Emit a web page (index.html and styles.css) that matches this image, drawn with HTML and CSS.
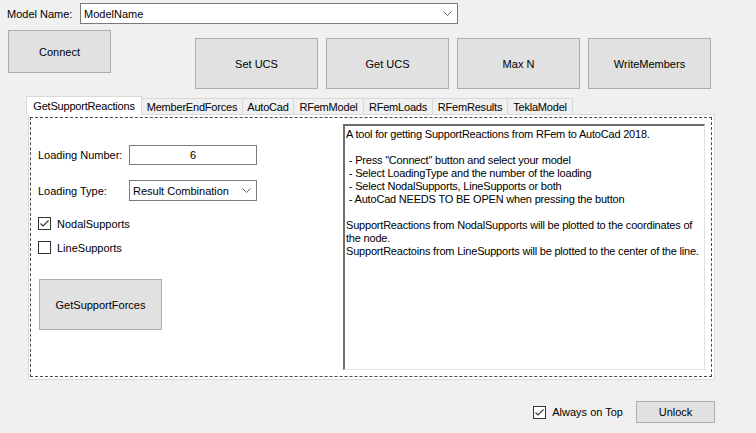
FILE: index.html
```html
<!DOCTYPE html>
<html>
<head>
<meta charset="utf-8">
<link rel="stylesheet" href="styles.css">
</head>
<body>
<div class="app">
  <div class="row-top">
    <span class="lbl-model">Model Name:</span>
    <div class="combo combo-model">
      <span>ModelName</span>
      <svg class="chev" width="9" height="5" viewBox="0 0 9 5"><path d="M0.5 0.5 L4.5 4.5 L8.5 0.5" fill="none" stroke="#606060" stroke-width="1"/></svg>
    </div>
  </div>

  <div class="row-btns">
    <div class="btn btn-connect">Connect</div>
    <div class="ucs">
      <div class="btn btn-big">Set UCS</div>
      <div class="btn btn-big">Get UCS</div>
      <div class="btn btn-big">Max N</div>
      <div class="btn btn-big">WriteMembers</div>
    </div>
  </div>

  <div class="tabs">
    <div class="tab active t1">GetSupportReactions</div>
    <div class="tab t2">MemberEndForces</div>
    <div class="tab t3">AutoCad</div>
    <div class="tab t4">RFemModel</div>
    <div class="tab t5">RFemLoads</div>
    <div class="tab t6">RFemResults</div>
    <div class="tab t7">TeklaModel</div>
  </div>

  <div class="panel">
    <div class="focus">
      <div class="left">
        <div class="field field-num">
          <span class="flabel">Loading Number:</span>
          <div class="input">6</div>
        </div>
        <div class="field field-type">
          <span class="flabel">Loading Type:</span>
          <div class="combo combo-type">
            <span>Result Combination</span>
            <svg class="chev" width="9" height="5" viewBox="0 0 9 5"><path d="M0.5 0.5 L4.5 4.5 L8.5 0.5" fill="none" stroke="#606060" stroke-width="1"/></svg>
          </div>
        </div>
        <div class="check check-nodal">
          <span class="box"><svg width="11" height="11" viewBox="0 0 11 11"><path d="M1.5 5.5 L4 8 L9.5 2.5" fill="none" stroke="#333" stroke-width="1.1"/></svg></span>
          <span>NodalSupports</span>
        </div>
        <div class="check check-line">
          <span class="box"></span>
          <span>LineSupports</span>
        </div>
        <div class="btn btn-gsf">GetSupportForces</div>
      </div>
      <div class="memo">A tool for getting SupportReactions from RFem to AutoCad 2018.

 - Press "Connect" button and select your model
 - Select LoadingType and the number of the loading
 - Select NodalSupports, LineSupports or both
 - AutoCad NEEDS TO BE OPEN when pressing the button

SupportReactions from NodalSupports will be plotted to the coordinates of
the node.
SupportReactoins from LineSupports will be plotted to the center of the line.</div>
    </div>
  </div>

  <div class="row-bottom">
    <div class="check check-top">
      <span class="box"><svg width="11" height="11" viewBox="0 0 11 11"><path d="M1.5 5.5 L4 8 L9.5 2.5" fill="none" stroke="#333" stroke-width="1.1"/></svg></span>
      <span>Always on Top</span>
    </div>
    <div class="btn btn-unlock">Unlock</div>
  </div>
</div>
</body>
</html>
```

FILE: styles.css
```css
* { box-sizing: border-box; }
html, body { margin: 0; padding: 0; }
body {
  background: #f0f0f0;
  font-family: "Liberation Sans", Arial, sans-serif;
  font-size: 11px;
  color: #000;
  width: 756px;
  height: 433px;
  overflow: hidden;
}
.app { width: 756px; }

.row-top {
  display: flex;
  align-items: center;
  padding: 3px 0 0 7px;
  height: 24px;
}
.lbl-model { width: 73px; }

.combo {
  position: relative;
  display: flex;
  align-items: center;
  justify-content: space-between;
  background: #fff;
  border: 1px solid #7a7a7a;
  padding: 0 5px 0 3px;
}
.combo-model { width: 378px; height: 21px; }
.chev { display: block; }

.btn {
  display: flex;
  align-items: center;
  justify-content: center;
  background: #e1e1e1;
  border: 1px solid #adadad;
}

.row-btns {
  display: flex;
  align-items: flex-start;
  padding-left: 8px;
  margin-top: 6px;
  height: 59px;
}
.btn-connect { width: 103px; height: 43px; }
.ucs {
  display: flex;
  gap: 8px;
  margin-left: 84px;
  margin-top: 8px;
}
.btn-big { width: 123px; height: 51px; }

.tabs {
  display: flex;
  align-items: flex-start;
  margin-left: 26px;
  margin-top: 7px;
  height: 18px;
}
.tab {
  height: 16px;
  margin-top: 2px;
  border-top: 1px solid #d9d9d9;
  border-right: 1px solid #d9d9d9;
  background: #f0f0f0;
  display: flex;
  align-items: center;
  justify-content: center;
  white-space: nowrap;
  letter-spacing: -0.2px;
}
.tab.active {
  position: relative;
  z-index: 1;
  height: 19px;
  margin-top: 0;
  border-left: 1px solid #d9d9d9;
  background: #fff;
  padding-bottom: 1px;
}
.t1 { width: 116px; }
.t2 { width: 101px; }
.t3 { width: 51px; }
.t4 { width: 70px; }
.t5 { width: 69px; }
.t6 { width: 75px; }
.t7 { width: 65px; }

.panel {
  margin-left: 28px;
  width: 687px;
  height: 266px;
  background: #fff;
  border: 1px solid #d9d9d9;
  padding: 2px 2px 2px 1px;
}
.focus {
  height: 100%;
  border: 1px dashed #4a4a4a;
  display: flex;
  padding-top: 6px;
}
.left {
  width: 312px;
  padding-left: 7px;
  position: relative;
}
.field {
  display: flex;
  align-items: center;
}
.flabel { width: 91px; }
.field-num { margin-top: 21px; }
.input {
  width: 128px;
  height: 20px;
  border: 1px solid #7a7a7a;
  display: flex;
  align-items: center;
  justify-content: center;
}
.field-type { margin-top: 15px; }
.combo-type { width: 128px; height: 21px; }

.check {
  display: flex;
  align-items: center;
  height: 13px;
}
.box {
  width: 13px;
  height: 13px;
  border: 1px solid #333;
  background: #fff;
  display: flex;
  align-items: center;
  justify-content: center;
  margin-right: 6px;
  flex: none;
}
.check-nodal { margin-top: 16px; }
.check-line { margin-top: 11px; }
.btn-gsf {
  width: 123px;
  height: 51px;
  margin-top: 25px;
  margin-left: 1px;
}

.memo {
  width: 362px;
  height: 246px;
  background: #fff;
  border-style: solid;
  border-width: 2px 1px 1px 2px;
  border-color: #6e6e6e #e3e3e3 #e3e3e3 #6e6e6e;
  padding: 2px 0 0 1px;
  white-space: pre;
  line-height: 13px;
  overflow: hidden;
  letter-spacing: -0.2px;
}

.row-bottom {
  display: flex;
  align-items: center;
  justify-content: flex-end;
  padding-right: 41px;
  margin-top: 21px;
}
.check-top { margin-right: 13px; }
.btn-unlock { width: 79px; height: 22px; }
```
